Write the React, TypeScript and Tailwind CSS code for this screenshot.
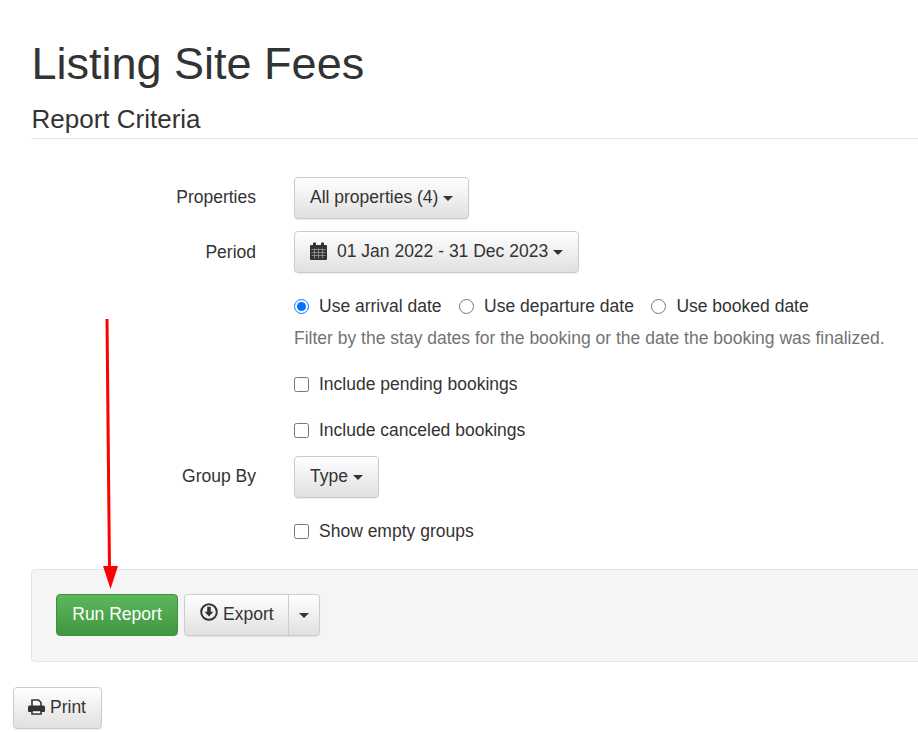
import type { ReactNode } from 'react';

const btn =
  'inline-flex h-[42px] items-center rounded-[4px] border border-[#ccc] bg-gradient-to-b from-white to-[#e0e0e0] px-[15px] pb-[2px] text-[#333] shadow-[0_1px_1px_rgba(0,0,0,0.08)]';

function Caret() {
  return <span className="mt-[2px] ml-[5px] inline-block h-0 w-0 border-x-[5px] border-t-[5px] border-x-transparent border-t-[#333]" />;
}

function CalendarIcon() {
  return (
    <svg viewBox="0 0 17 18" className="mr-[10px] h-[18px] w-[17px]">
      <path
        d="M1 3h2V1.5a1 1 0 0 1 1-1h1a1 1 0 0 1 1 1V3h5V1.5a1 1 0 0 1 1-1h1a1 1 0 0 1 1 1V3h2a1 1 0 0 1 1 1v13a1 1 0 0 1-1 1H1a1 1 0 0 1-1-1V4a1 1 0 0 1 1-1z"
        fill="#333"
      />
      <path d="M1.5 7.5h14M1.5 10.5h14M1.5 13.5h14M4.5 6.5v10M8.5 6.5v10M12.5 6.5v10" stroke="#999" strokeWidth="0.8" />
    </svg>
  );
}

function PrintIcon() {
  return (
    <svg viewBox="0 0 17 16" className="mr-[5px] -ml-px h-[16px] w-[17px]">
      <path d="M4 7V1h6.5L13 3.5V7M4 11.5h9V15H4z" fill="#fff" stroke="#333" strokeWidth="1.6" />
      <path d="M1.5 6.5h14A1.5 1.5 0 0 1 17 8v4a1 1 0 0 1-1 1h-3v-2H4v2H1a1 1 0 0 1-1-1V8a1.5 1.5 0 0 1 1.5-1.5z" fill="#333" />
    </svg>
  );
}

function Row({ label, labelClass, children }: { label?: string; labelClass?: string; children: ReactNode }) {
  return (
    <div className="flex items-center">
      <div className={`w-[225px] text-right ${labelClass ?? ''}`}>{label}</div>
      <div className="ml-[38px]">{children}</div>
    </div>
  );
}

function Radio({ label, checked }: { label: string; checked?: boolean }) {
  return (
    <label className="flex items-center gap-[10px]">
      <input type="radio" name="date" defaultChecked={checked} className="m-0 h-[15px] w-[15px] accent-[#0075ff]" />
      <span>{label}</span>
    </label>
  );
}

function Check({ label }: { label: string }) {
  return (
    <label className="flex h-[24px] items-center gap-[10px]">
      <input type="checkbox" className="m-0 h-[15px] w-[15px]" />
      <span>{label}</span>
    </label>
  );
}

export default function App() {
  return (
    <div className="relative h-[732px] w-[918px] overflow-hidden bg-white font-['Liberation_Sans',Arial,sans-serif] text-[17.5px] leading-[24px] text-[#333]">
      <div className="pl-[31px] pt-[36px]">
        <h1 className="ml-[0.5px] text-[45px] leading-[56px] font-normal">Listing Site Fees</h1>
        <h2 className="mt-[11px] ml-[0.5px] w-[900px] text-[26px] leading-[32px] font-normal">Report Criteria</h2>
        <div className="mt-[3px] h-px w-[900px] bg-[#e5e5e5]" />

        <div className="mt-[38px] flex flex-col">
          <Row label="Properties" labelClass="pb-[2px]">
            <button type="button" className={btn}>
              All properties (4)
              <Caret />
            </button>
          </Row>
          <div className="mt-[12px]">
            <Row label="Period">
              <button type="button" className={btn}>
                <CalendarIcon />
                01 Jan 2022 - 31 Dec 2023
                <Caret />
              </button>
            </Row>
          </div>
          <div className="mt-[21px]">
            <Row>
              <div className="flex items-center gap-[17.5px]">
                <Radio label="Use arrival date" checked />
                <Radio label="Use departure date" />
                <Radio label="Use booked date" />
              </div>
            </Row>
          </div>
          <div className="mt-[8px] ml-[263px] text-[#737373]">
            Filter by the stay dates for the booking or the date the booking was finalized.
          </div>
          <div className="mt-[22px] ml-[263px]">
            <Check label="Include pending bookings" />
          </div>
          <div className="mt-[22px] ml-[263px]">
            <Check label="Include canceled bookings" />
          </div>
          <div className="mt-[14px]">
            <Row label="Group By" labelClass="pb-[2px]">
              <button type="button" className={btn}>
                Type
                <Caret />
              </button>
            </Row>
          </div>
          <div className="mt-[21px] ml-[263px]">
            <Check label="Show empty groups" />
          </div>
        </div>

        <div className="mt-[26px] flex h-[93px] w-[900px] items-center rounded-l-[4px] border border-[#e3e3e3] bg-[#f5f5f5] pb-px pl-[24px]">
          <button
            type="button"
            className="h-[42px] w-[122px] rounded-[4px] border border-[#3e8f3e] bg-gradient-to-b from-[#5cb85c] to-[#419641] pb-[2px] text-white"
          >
            Run Report
          </button>
          <div className="ml-[6px] flex h-[42px] rounded-[4px] border border-[#ccc] bg-gradient-to-b from-white to-[#e0e0e0] text-[#333] shadow-[0_1px_1px_rgba(0,0,0,0.08)]">
            <button type="button" className="flex items-center pr-[14px] pb-[2px] pl-[15px]">
              <svg viewBox="0 0 18 18" className="mr-[5px] h-[18px] w-[18px] -translate-y-[2px]">
                <circle cx="9" cy="9" r="7.8" fill="none" stroke="#333" strokeWidth="2" />
                <path d="M7.2 3.8h3.6v5h2.6L9 13.6 4.6 8.8h2.6z" fill="#333" />
              </svg>
              Export
            </button>
            <button type="button" className="flex w-[31px] items-center justify-center border-l border-[#ccc]">
              <span className="inline-block h-0 w-0 border-x-[5px] border-t-[5px] border-x-transparent border-t-[#333]" />
            </button>
          </div>
        </div>
      </div>

      <button type="button" className={`${btn} mt-[25px] ml-[13px]`}>
        <PrintIcon />
        Print
      </button>

      {/* annotation arrow */}
      <svg className="absolute top-[318px] left-[98px]" width="26" height="272" viewBox="0 0 26 272">
        <path d="M9 1 L11.5 252" stroke="#ff0000" strokeWidth="3" fill="none" />
        <path d="M5 248 L20 248 L12.5 271 Z" fill="#ff0000" />
      </svg>
    </div>
  );
}
